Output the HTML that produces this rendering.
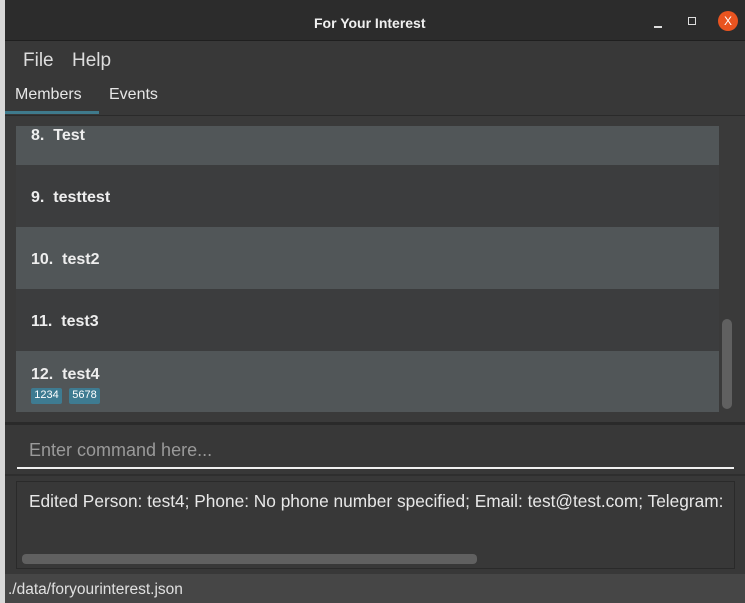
<!DOCTYPE html>
<html><head><style>
*{margin:0;padding:0;box-sizing:border-box}
body{width:745px;height:603px;overflow:hidden;background:#d8d8d8;font-family:"Liberation Sans","DejaVu Sans",sans-serif;position:relative}
.a{position:absolute}
.win{left:5px;top:0;width:740px;height:603px;background:#383838}
.title{left:5px;top:0;width:740px;height:41px;background:#2c2c2c;border-bottom:1px solid #1f1f1f}
.t{color:#f0f0f0;font-weight:bold;font-size:14px}
.m{color:#ddd;font-size:19px}
.tab{color:#e6e6e6;font-size:16px}
.cell{left:16px;width:703px;height:62px;color:#eee;font-weight:bold;font-size:16px;padding-left:15px}
.l{background:#515658}.d{background:#3c3d3e}
.tag{display:inline-block;background:#3e7b91;color:#fff;font-size:11px;font-weight:normal;padding:1px 3px;border-radius:2px;margin-right:7px;width:31px;height:16px;text-align:center}
</style></head><body>
<div class="a win"></div>
<div class="a title"></div>
<div class="a t" style="left:314px;top:15px">For Your Interest</div>
<div class="a" style="left:654px;top:26px;width:8px;height:1.5px;background:#ddd"></div>
<div class="a" style="left:688px;top:17px;width:8px;height:8px;border:1.5px solid #ddd"></div>
<div class="a" style="left:718px;top:11px;width:20px;height:20px;border-radius:50%;background:#e95420;color:#fff;font-size:12px;text-align:center;line-height:20px">X</div>
<div class="a m" style="left:23px;top:50px">File</div>
<div class="a m" style="left:72px;top:50px">Help</div>
<div class="a tab" style="left:15px;top:86px">Members</div>
<div class="a tab" style="left:109px;top:86px">Events</div>
<div class="a" style="left:5px;top:111px;width:94px;height:3px;background:#3f7a8c"></div>
<div class="a" style="left:5px;top:115px;width:740px;height:1px;background:#2a2a2a"></div>
<div class="a" style="left:5px;top:116px;width:740px;height:306px;background:#3a3a3a"></div>
<div class="a cell l" style="top:126px;height:39px;padding-top:0"><span class="a" style="left:15px;top:1px">8.&nbsp; Test</span></div>
<div class="a cell d" style="top:165px"><span class="a" style="left:15px;top:24px">9.&nbsp; testtest</span></div>
<div class="a cell l" style="top:227px"><span class="a" style="left:15px;top:24px">10.&nbsp; test2</span></div>
<div class="a cell d" style="top:289px"><span class="a" style="left:15px;top:24px">11.&nbsp; test3</span></div>
<div class="a cell l" style="top:351px;height:61px"><span class="a" style="left:15px;top:15px">12.&nbsp; test4</span>
<div class="a" style="left:15px;top:34px;white-space:nowrap"><span class="tag">1234</span><span class="tag">5678</span></div></div>
<div class="a" style="left:722px;top:319px;width:10px;height:90px;border-radius:5px;background:#606060"></div>
<div class="a" style="left:5px;top:422px;width:740px;height:3px;background:#2a2a2a"></div>
<div class="a" style="left:29px;top:440px;color:#9a9a9a;font-size:18px">Enter command here...</div>
<div class="a" style="left:17px;top:467px;width:717px;height:1.5px;background:#f0f0f0"></div>
<div class="a" style="left:5px;top:474px;width:740px;height:2px;background:#2e2e2e"></div>
<div class="a" style="left:16px;top:481px;width:719px;height:88px;border:1px solid #2a2a2a;background:#383838"></div>
<div class="a" style="left:29px;top:491px;color:#e8e8e8;font-size:17.3px;white-space:nowrap;width:700px;overflow:hidden">Edited Person: test4; Phone: No phone number specified; Email: test@test.com; Telegram:</div>
<div class="a" style="left:22px;top:554px;width:455px;height:10px;border-radius:4px;background:#606060"></div>
<div class="a" style="left:5px;top:574px;width:740px;height:29px;background:#464646"></div>
<div class="a" style="left:8px;top:581px;color:#e0e0e0;font-size:15.5px">./data/foryourinterest.json</div>
</body></html>
